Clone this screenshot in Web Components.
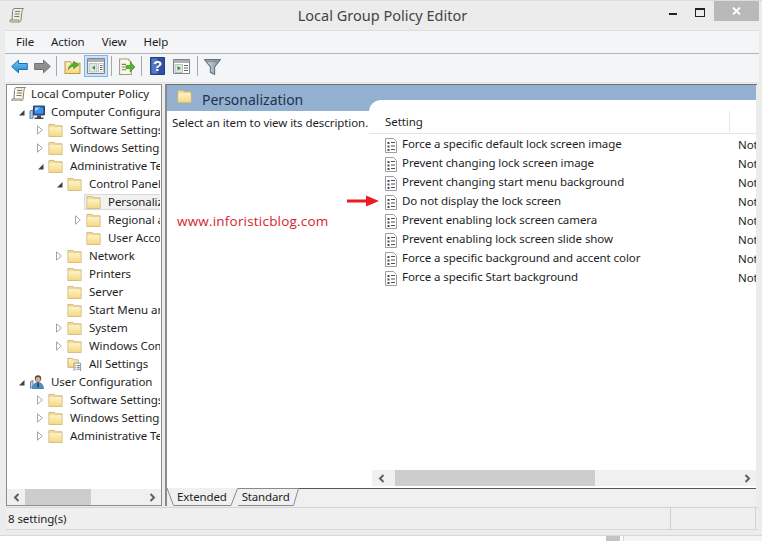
<!DOCTYPE html>
<html>
<head>
<meta charset="utf-8">
<title>Local Group Policy Editor</title>
<style>
  html, body { margin: 0; height: 100%; background: #fff; overflow: hidden; }
  body { font: 11.5px/18px "Noto Sans", "Open Sans", sans-serif; letter-spacing: -.08px; color: #1e1e1e; }
</style>
</head>
<body>
<gpe-window>
  <gpe-titlebar slot="title">Local Group Policy Editor</gpe-titlebar>
  <gpe-menubar slot="menu">
    <span>File</span><span>Action</span><span>View</span><span>Help</span>
  </gpe-menubar>
  <gpe-toolbar slot="tools"></gpe-toolbar>

  <gpe-tree slot="tree">
    <gpe-tree-row level="0" icon="policy">Local Computer Policy</gpe-tree-row>
    <gpe-tree-row level="1" toggle="open" icon="computer">Computer Configuration</gpe-tree-row>
    <gpe-tree-row level="2" toggle="closed" icon="folder">Software Settings</gpe-tree-row>
    <gpe-tree-row level="2" toggle="closed" icon="folder">Windows Settings</gpe-tree-row>
    <gpe-tree-row level="2" toggle="open" icon="folder">Administrative Templates</gpe-tree-row>
    <gpe-tree-row level="3" toggle="open" icon="folder">Control Panel</gpe-tree-row>
    <gpe-tree-row level="4" icon="folder" selected>Personalization</gpe-tree-row>
    <gpe-tree-row level="4" toggle="closed" icon="folder">Regional and</gpe-tree-row>
    <gpe-tree-row level="4" icon="folder">User Accounts</gpe-tree-row>
    <gpe-tree-row level="3" toggle="closed" icon="folder">Network</gpe-tree-row>
    <gpe-tree-row level="3" icon="folder">Printers</gpe-tree-row>
    <gpe-tree-row level="3" icon="folder">Server</gpe-tree-row>
    <gpe-tree-row level="3" icon="folder">Start Menu and Taskbar</gpe-tree-row>
    <gpe-tree-row level="3" toggle="closed" icon="folder">System</gpe-tree-row>
    <gpe-tree-row level="3" toggle="closed" icon="folder">Windows Components</gpe-tree-row>
    <gpe-tree-row level="3" icon="allsettings">All Settings</gpe-tree-row>
    <gpe-tree-row level="1" toggle="open" icon="user">User Configuration</gpe-tree-row>
    <gpe-tree-row level="2" toggle="closed" icon="folder">Software Settings</gpe-tree-row>
    <gpe-tree-row level="2" toggle="closed" icon="folder">Windows Settings</gpe-tree-row>
    <gpe-tree-row level="2" toggle="closed" icon="folder">Administrative Templates</gpe-tree-row>
  </gpe-tree>

  <gpe-details slot="details" heading="Personalization">
    <gpe-setting>Force a specific default lock screen image</gpe-setting>
    <gpe-setting>Prevent changing lock screen image</gpe-setting>
    <gpe-setting>Prevent changing start menu background</gpe-setting>
    <gpe-setting>Do not display the lock screen</gpe-setting>
    <gpe-setting>Prevent enabling lock screen camera</gpe-setting>
    <gpe-setting>Prevent enabling lock screen slide show</gpe-setting>
    <gpe-setting>Force a specific background and accent color</gpe-setting>
    <gpe-setting>Force a specific Start background</gpe-setting>
  </gpe-details>

  <gpe-statusbar slot="status">8 setting(s)</gpe-statusbar>
</gpe-window>
<gpe-desk></gpe-desk>

<script>
// icons used all over the window, 16x16 box
const folderDefs = `<defs><linearGradient id="fg" x1="0" y1="0" x2="0" y2="1"><stop offset="0" stop-color="#fdf3c8"/><stop offset="1" stop-color="#f6d883"/></linearGradient></defs>`;
const ICONS = {
  folder: `${folderDefs}<path d="M1 1.500h5.500l1 1.500H15v11.500H1z" fill="#f3dc97" stroke="#cdb676"/><path d="M1.500 4.500h13v9.500h-13z" fill="url(#fg)"/>`,
  allsettings: `${folderDefs}<path d="M1 1.500h5l1 1.500h5v8H1z" fill="url(#fg)" stroke="#c9ad68"/><path d="M7.500 6.500h7v9h-7z" fill="#fff" stroke="#8b8f94"/><path d="M9 9h1M11 9h2.500M9 11h1M11 11h2.500M9 13h1M11 13h2.500" stroke="#555"/>`,
  policy: `<path d="M5 1.500h9.500c-1 1-1.500 2-1.700 4L12 13.500c-.2 1-1 1.500-2 1.500H2c-1 0-1.500-.8-1-2h8.500L10 13c-.2.700-.1 1 .2 1.500" fill="#f1ecd8" stroke="#8a8672"/><path d="M5 1.500C4 2 3.700 3 3.500 4.500L3 12.800M6 4.500h5M5.700 7h5M5.400 9.500h5" fill="none" stroke="#7d7a6c"/>`,
  computer: `<path d="M1 7l3-1v8l-3 1.500z" fill="#a9c9e6" stroke="#5a7fa4"/><path d="M4.500 2h11v9h-11z" fill="#1f5fc4" stroke="#3b4650"/><path d="M6 3.500h8v6H6z" fill="#3f94ea"/><path d="M6 3.500h5l-5 4z" fill="#9fd2f8"/><path d="M8 11.500h4v2h2.500v1.500h-9V13.500H8z" fill="#3d4650"/>`,
  user: `<path d="M1.500 7.500l2.500-1v6l-2.500 2z" fill="#a9c9e6" stroke="#6a8fb4"/><circle cx="9" cy="4.500" r="3.200" fill="#5f4a3a"/><circle cx="9" cy="5.200" r="2.300" fill="#d8ae8c"/><path d="M3.500 15c0-4 2-6.500 5.500-6.500s5.500 2.500 5.500 6.500z" fill="#4f8fc4" stroke="#39658f" stroke-width=".6"/><path d="M8.300 8.500h1.400l.3 4-1 1-1-1z" fill="#2e3e50"/>`,
  setting: `<path d="M1.500 1.500h8l3 3v11h-11z" fill="#fff" stroke="#9a9da1"/><path d="M3.500 5h2v2h-2zM3.500 8.500h2v2h-2zM3.500 12h2v2h-2z" fill="#4a4d52"/><path d="M7 5.500h4M7 9h4M7 12.500h4" stroke="#4a4d52" stroke-width="1.200"/>`,
  back: `<defs><linearGradient id="b" x1="0" y1="0" x2="0" y2="1"><stop offset="0" stop-color="#7cc7f2"/><stop offset="1" stop-color="#1d86d0"/></linearGradient></defs><path d="M.7 7.500L7.500 1.200v3.300h8.800v6H7.500v3.300z" fill="url(#b)" stroke="#1b6fb0"/>`,
  forward: `<path d="M16.300 7.500L9.500 1.200v3.300H.7v6h8.800v3.300z" fill="#8e8e8e" stroke="#6f6f6f"/>`,
  up: `${folderDefs}<path d="M1 3.500h5l1 1.500h8v9.500H1z" fill="url(#fg)" stroke="#c09a48"/><path d="M4 11c.3-3 2-5 5-5.500V3l5 3.500-5 3.500V7.500C7 8 5.500 9 4 11z" fill="#55b32a" stroke="#3f8a1c" stroke-width=".6"/>`,
  panel: `<path d="M.5 1.500h17v15H.5z" fill="#fff" stroke="#7f8388"/><path d="M1 2h16v3H1z" fill="#aab0b6"/><path d="M2 6.500h8v8.500H2z" fill="#dfe6e6" stroke="#9aa0a4" stroke-width=".6"/><path d="M11.500 6.500h5v8.500h-5z" fill="#fff" stroke="#9aa0a4" stroke-width=".6"/><path d="M8 8.500v4.500L5 10.700z" fill="#2f9a3a"/><path d="M13 8.500h2.500M13 10.500h2.500M13 12.500h2.500" stroke="#666"/>`,
  panel2: `<path d="M.5 1.500h16v14H.5z" fill="#fff" stroke="#7f8388"/><path d="M1 2h15v3H1z" fill="#aab0b6"/><path d="M2 6.500h7.500v8H2z" fill="#dfe6e6" stroke="#9aa0a4" stroke-width=".6"/><path d="M4.500 8v4.500L8 10.200z" fill="#2f9a3a"/><path d="M11 7.500h4M11 10h4M11 12.500h4" stroke="#666" stroke-width="1.200"/>`,
  export: `<path d="M1.500 1h8l3 3v11.500h-11z" fill="#fbf8e6" stroke="#9c9a84"/><path d="M3.500 6h4M3.500 8.500h3M3.500 11h4" stroke="#777"/><path d="M7.500 7h4V3.800l4.500 4.700-4.500 4.700V10h-4z" fill="#55b32a" stroke="#3f8a1c" stroke-width=".6"/>`,
  help: `<path d="M.5.500h14v17H.5z" fill="#2d51a6" stroke="#23407f"/><path d="M1.500 1.500h6v15h-6z" fill="#5679c4"/>`,
  filter: `<defs><linearGradient id="f" x1="0" y1="0" x2="1" y2="0"><stop offset="0" stop-color="#dfe5ea"/><stop offset="1" stop-color="#7d8b97"/></linearGradient></defs><path d="M.5 1.500h15L10 8.500v7l-4-2v-5z" fill="url(#f)" stroke="#66737e"/><path d="M1.500 2.200h13L12.800 4H3.200z" fill="#8696a3"/>`
};

class GpeIcon extends HTMLElement {
  connectedCallback() {
    const size = this.getAttribute("size") || 16;
    const w = this.getAttribute("vw") || 16, h = this.getAttribute("vh") || 16;
    this.attachShadow({ mode: "open" }).innerHTML = `
      <style>:host{display:inline-flex;flex:none} svg{display:block}</style>
      <svg width="${this.getAttribute("w") || size}" height="${this.getAttribute("h") || size}" viewBox="0 0 ${w} ${h}">${ICONS[this.getAttribute("name")]}</svg>`;
  }
}

class GpeWindow extends HTMLElement {
  constructor() {
    super();
    this.attachShadow({ mode: "open" }).innerHTML = `
      <style>
        :host{display:flex;flex-direction:column;width:762px;height:536px;background:#ececec;border-bottom:1px solid #d8d8d8;box-sizing:border-box}
        .bars{display:flex;flex-direction:column;margin:0 3px 0 5px}
        .panes{display:flex;height:422px;margin:1px 5px 0 6px}
        .status{margin:1px 4px 0 6px}
      </style>
      <slot name="title"></slot>
      <div class="bars"><slot name="menu"></slot><slot name="tools"></slot></div>
      <div class="panes"><slot name="tree"></slot><slot name="details"></slot></div>
      <div class="status"><slot name="status"></slot></div>`;
  }
}

class GpeTitlebar extends HTMLElement {
  constructor() {
    super();
    this.attachShadow({ mode: "open" }).innerHTML = `
      <style>
        :host{display:flex;align-items:center;height:30px;flex:none;border-top:1px solid #dcdcdc;box-sizing:border-box}
        .ico{margin:-1px 0 0 9px}
        .text{flex:1;text-align:center;font-size:14.500px;letter-spacing:0;color:#444;margin-top:-1px;padding-left:71px}
        .btns{display:flex;align-self:flex-start;align-items:flex-start}
        .min{width:8px;height:2px;background:#222;margin:12px 18px 0 0}
        .max{width:8px;height:6px;border:1px solid #222;border-top-width:2px;margin:7px 9px 0 0}
        .close{width:45px;height:20px;background:#b9b9b9;margin-right:3px;display:flex;align-items:center;justify-content:center}
      </style>
      <gpe-icon class="ico" name="policy"></gpe-icon>
      <div class="text"><slot></slot></div>
      <div class="btns">
        <div class="min"></div><div class="max"></div>
        <div class="close"><svg width="9" height="8" viewBox="0 0 9 8"><path d="M1 .5l7 7M8 .5l-7 7" stroke="#fff" stroke-width="1.800"/></svg></div>
      </div>`;
  }
}

class GpeMenubar extends HTMLElement {
  constructor() {
    super();
    this.attachShadow({ mode: "open" }).innerHTML = `
      <style>
        :host{display:flex;height:24px;box-sizing:border-box;background:#f4f5f7;border-top:1px solid #dedede;border-bottom:1px solid #b4b4b4;padding:0 0 1px 11px;gap:17px;align-items:center}
      </style><slot></slot>`;
  }
}

class GpeToolbar extends HTMLElement {
  constructor() {
    super();
    this.attachShadow({ mode: "open" }).innerHTML = `
      <style>
        :host{display:flex;align-items:center;height:29px;box-sizing:border-box;background:#f4f5f7;border-bottom:1px solid #e4e4e4;padding:0 0 4px 3px}
        .b{width:23px;height:22px;display:flex;align-items:center;justify-content:center;flex:none;box-sizing:border-box}
        .on{background:#cde3f7;border:1px solid #7fb5e6}
        .sep{width:1px;height:20px;background:#a8a8a8;flex:none;margin:0 3px}
        .q{position:absolute;left:0;right:0;top:0;text-align:center;color:#fff;font:bold 15px/22px "Liberation Sans",sans-serif}
      </style>
      <div class="b"><gpe-icon name="back" w="17" h="15" vw="17" vh="15"></gpe-icon></div>
      <div class="b"><gpe-icon name="forward" w="17" h="15" vw="17" vh="15"></gpe-icon></div>
      <div class="sep" style="margin-left:2px"></div>
      <div class="b" style="margin-left:1px"><gpe-icon name="up" w="17" h="17"></gpe-icon></div>
      <div class="b on" style="width:24px"><gpe-icon name="panel" vw="18" vh="18" w="18" h="18"></gpe-icon></div>
      <div class="sep"></div>
      <div class="b"><gpe-icon name="export" w="17" h="17"></gpe-icon></div>
      <div class="sep"></div>
      <div class="b" style="position:relative;margin-left:1px">
        <gpe-icon name="help" vw="15" vh="18" w="15" h="18"></gpe-icon>
        <span class="q">?</span>
      </div>
      <div class="b" style="margin-left:1px"><gpe-icon name="panel2" vw="17" vh="17" w="17" h="17"></gpe-icon></div>
      <div class="sep" style="margin-left:4px"></div>
      <div class="b"><gpe-icon name="filter" w="17" h="17"></gpe-icon></div>`;
  }
}

class GpeScroll extends HTMLElement {
  connectedCallback() {
    const left = this.getAttribute("thumb-left"), width = this.getAttribute("thumb-width");
    this.attachShadow({ mode: "open" }).innerHTML = `
      <style>
        :host{display:flex;height:16px;background:#f0f0f0;flex:none}
        .btn{width:18px;display:flex;align-items:center;justify-content:center;flex:none}
        .track{flex:1;display:flex}
        .thumb{background:#cdcdcd;margin-left:${left}px;width:${width}px}
      </style>
      <div class="btn"><svg width="7" height="9" viewBox="0 0 7 9"><path d="M5.500 1L2 4.500 5.500 8" fill="none" stroke="#606060" stroke-width="2"/></svg></div>
      <div class="track"><div class="thumb"></div></div>
      <div class="btn"><svg width="7" height="9" viewBox="0 0 7 9"><path d="M1.500 1L5 4.500 1.500 8" fill="none" stroke="#606060" stroke-width="2"/></svg></div>`;
  }
}

class GpeTree extends HTMLElement {
  constructor() {
    super();
    this.attachShadow({ mode: "open" }).innerHTML = `
      <style>
        :host{display:flex;flex-direction:column;width:156px;flex:none;box-sizing:border-box;background:#fff;border:1px solid #8e8e8e}
        .rows{flex:1;overflow:hidden}
      </style>
      <div class="rows"><slot></slot></div>
      <gpe-scroll thumb-left="0" thumb-width="66"></gpe-scroll>`;
  }
}

class GpeTreeRow extends HTMLElement {
  connectedCallback() {
    const level = +this.getAttribute("level");
    const toggle = this.getAttribute("toggle");
    const big = level < 2;
    const glyph = toggle === "open"
      ? `<svg width="7" height="7" viewBox="0 0 7 7"><path d="M6.500 1v5.500H1z" fill="#404040"/></svg>`
      : toggle === "closed"
      ? `<svg width="6" height="10" viewBox="0 0 6 10"><path d="M.5.800L5.300 5 .5 9.200z" fill="#fff" stroke="#a6a6a6"/></svg>`
      : "";
    const box = this.hasAttribute("selected") ? "background:#f2f2f2;border:1px solid #dadada;" : "border:1px solid transparent;";
    const gap = level === 0 ? 4 : big ? 6 : 7;
    this.attachShadow({ mode: "open" }).innerHTML = `
      <style>
        :host{display:flex;align-items:center;height:18px;white-space:nowrap;padding-left:${level === 0 ? 2 : (level - 1) * 19 + 9}px;margin-right:1px;overflow:hidden}
        .arrow{width:10px;flex:none;display:flex;justify-content:center;align-items:center;margin-right:4px}
        .sel{display:flex;align-items:center;flex:1;min-width:0;overflow:hidden;height:16px;box-sizing:border-box;padding-left:1px;margin-left:${level === 0 ? 0 : -3}px;${box}border-right:0}
        span{line-height:16px;margin-top:-1px}
        gpe-icon{margin-right:${gap}px}
      </style>
      ${level === 0 ? "" : `<div class="arrow">${glyph}</div>`}
      <div class="sel">
        <gpe-icon name="${this.getAttribute("icon")}" w="${big ? 16 : 15}" h="${big ? 16 : 15}"></gpe-icon>
        <span><slot></slot></span>
      </div>`;
  }
}

class GpeSetting extends HTMLElement {
  constructor() {
    super();
    this.attachShadow({ mode: "open" }).innerHTML = `
      <style>
        :host{display:flex;align-items:center;height:19px;white-space:nowrap}
        .name{display:flex;align-items:center;gap:4px;width:369px;padding-left:15px;box-sizing:border-box;flex:none}
        .state{overflow:hidden}
        span{margin-top:-1px}
      </style>
      <div class="name"><gpe-icon name="setting" w="14" h="16" vw="14" vh="16"></gpe-icon><span><slot></slot></span></div>
      <div class="state">Not configured</div>`;
  }
}

class GpeDetails extends HTMLElement {
  connectedCallback() {
    this.attachShadow({ mode: "open" }).innerHTML = `
      <style>
        :host{display:flex;flex-direction:column;flex:1;min-width:0;margin-left:3px;border-left:2px solid #8a8a8a;border-top:1px solid #6e7075}
        .band{height:26px;background:#94b0d0;display:flex;align-items:center;padding:0 0 3px 10px;gap:10px;font-size:14px;letter-spacing:0;color:#22324a;flex:none;box-sizing:border-box;margin-right:1px}
        .band span{margin-top:7px}
        .body{flex:1;display:flex;min-height:0;background:#fff;margin-right:1px;position:relative}
        .desc{width:202px;flex:none;align-self:flex-start;box-sizing:border-box;padding:3px 0 0 5px;white-space:nowrap;overflow:hidden}
        .mark{position:absolute;left:10px;top:101px;font:13.500px/18px "Open Sans",sans-serif;letter-spacing:.2px;color:#d7232b}
        .arrow{position:absolute;left:180px;top:84px;z-index:1}
        .list{flex:1;min-width:0;display:flex;flex-direction:column;background:#fff;border-radius:12px 0 0 0;margin-top:-11px;position:relative;overflow:hidden}
        .head{height:34px;flex:none;box-sizing:border-box;display:flex;align-items:flex-end;border-bottom:1px solid #e5e5e5;padding:0 0 2px 16px}
        .head i{position:absolute;left:360px;top:11px;height:21px;width:1px;background:#e6e6e6}
        .rows{flex:1;padding-top:1px;overflow:hidden}
        .sb{padding:0 0 2px 3px;background:#fff}
        .tabs{height:18px;flex:none;display:flex;background:#f0f0f0;margin-right:1px;letter-spacing:-.15px}
        .tabs svg{display:block;flex:none}
        .t{display:flex;align-items:center;height:18px;box-sizing:border-box}
        .ext{border-bottom:1px solid #8a8a8a;padding:0 4px 0 3px}
        .std{border-top:1px solid #8a8a8a;border-bottom:1px solid #8a8a8a;padding:0 3px 0 4px}
        .rest{flex:1;border-top:1px solid #555}
      </style>
      <div class="band"><gpe-icon name="folder" w="15" h="15"></gpe-icon><span>${this.getAttribute("heading")}</span></div>
      <div class="body">
        <div class="desc">Select an item to view its description.</div>
        <div class="mark">www.inforisticblog.com</div>
        <svg class="arrow" width="32" height="12" viewBox="0 0 32 12"><path d="M0 4.500h19V.5l13 5.500-13 5.500v-4H0z" fill="#ea1c24"/></svg>
        <div class="list">
          <div class="head"><span>Setting</span><i></i></div>
          <div class="rows"><slot></slot></div>
          <div class="sb"><gpe-scroll thumb-left="5" thumb-width="200"></gpe-scroll></div>
        </div>
      </div>
      <div class="tabs">
        <svg width="7" height="18"><path d="M0 0L6.500 17.500" stroke="#8a8a8a" fill="none"/></svg>
        <div class="t ext">Extended</div>
        <svg width="7" height="18"><path d="M0 17.500L6.500 .5" stroke="#8a8a8a" fill="none"/></svg>
        <div class="t std">Standard</div>
        <svg width="6" height="18"><path d="M.5 17.500L5.500 .5" stroke="#8a8a8a" fill="none"/><path d="M0 .5h6" stroke="#8a8a8a"/></svg>
        <div class="rest"></div>
      </div>`;
  }
}

class GpeStatusbar extends HTMLElement {
  constructor() {
    super();
    this.attachShadow({ mode: "open" }).innerHTML = `
      <style>
        :host{display:flex;height:23px;box-sizing:border-box;background:#efefef;border-top:1px solid #d6d6d6;border-bottom:1px solid #d6d6d6;align-items:center}
        .a{flex:1;padding-left:2px}
        .b{width:84px;align-self:stretch;border-left:1px solid #d0d0d0}
        .c{width:2px;align-self:stretch;border-left:1px solid #d0d0d0}
      </style>
      <div class="a"><slot></slot></div><div class="b"></div><div class="c"></div>`;
  }
}

// strip of desktop under the window
class GpeDesk extends HTMLElement {
  constructor() {
    super();
    this.attachShadow({ mode: "open" }).innerHTML = `
      <style>
        :host{display:flex;height:5px;padding-left:606px}
        .chip{width:14px;background:#c4c4c4}
        .line{width:1px;background:#d8d8d8;margin-left:3px}
        .rest{flex:1;background:#f4f4f4}
      </style>
      <div class="chip"></div><div class="line"></div><div class="rest"></div>`;
  }
}

customElements.define("gpe-icon", GpeIcon);
customElements.define("gpe-scroll", GpeScroll);
customElements.define("gpe-window", GpeWindow);
customElements.define("gpe-titlebar", GpeTitlebar);
customElements.define("gpe-menubar", GpeMenubar);
customElements.define("gpe-toolbar", GpeToolbar);
customElements.define("gpe-tree", GpeTree);
customElements.define("gpe-tree-row", GpeTreeRow);
customElements.define("gpe-setting", GpeSetting);
customElements.define("gpe-details", GpeDetails);
customElements.define("gpe-statusbar", GpeStatusbar);
customElements.define("gpe-desk", GpeDesk);
</script>
</body>
</html>
